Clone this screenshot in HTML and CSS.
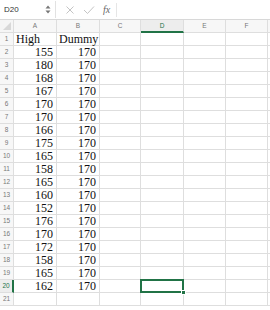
FILE: index.html
```html
<!DOCTYPE html>
<html>
<head>
<meta charset="utf-8">
<link rel="stylesheet" href="styles.css">
</head>
<body>
<div class="fbar">
  <div class="namebox">
    <span class="ref">D20</span>
    <svg class="spin" width="6" height="11" viewBox="0 0 6 11"><path d="M0.5 4.5 L3 1.5 L5.5 4.5 Z M0.5 6.5 L3 9.5 L5.5 6.5 Z" fill="#777"/></svg>
  </div>
  <div class="sep"></div>
  <div class="tools">
    <svg width="10" height="10" viewBox="0 0 10 10"><path d="M1.5 1.5 L8.5 8.5 M8.5 1.5 L1.5 8.5" stroke="#c4c4c4" stroke-width="1"/></svg>
    <svg width="12" height="10" viewBox="0 0 12 10"><path d="M1 5 L4.5 8.5 L11 1.5" stroke="#c4c4c4" stroke-width="1" fill="none"/></svg>
    <span class="fx">fx</span>
  </div>
  <div class="sep2"></div>
</div>
<div class="grid">
  <div class="corner"><svg width="10" height="10" viewBox="0 0 10 10"><path d="M9 1 L9 9 L1 9 Z" fill="#d8d8d8"/></svg></div>
  <div class="ch">A</div><div class="ch">B</div><div class="ch">C</div><div class="ch chsel">D</div><div class="ch">E</div><div class="ch">F</div><div class="ch last"></div>

  <div class="rh">1</div><div class="c t">High</div><div class="c t">Dummy</div><div class="c"></div><div class="c"></div><div class="c"></div><div class="c"></div><div class="c last"></div>
  <div class="rh">2</div><div class="c n">155</div><div class="c n">170</div><div class="c"></div><div class="c"></div><div class="c"></div><div class="c"></div><div class="c last"></div>
  <div class="rh">3</div><div class="c n">180</div><div class="c n">170</div><div class="c"></div><div class="c"></div><div class="c"></div><div class="c"></div><div class="c last"></div>
  <div class="rh">4</div><div class="c n">168</div><div class="c n">170</div><div class="c"></div><div class="c"></div><div class="c"></div><div class="c"></div><div class="c last"></div>
  <div class="rh">5</div><div class="c n">167</div><div class="c n">170</div><div class="c"></div><div class="c"></div><div class="c"></div><div class="c"></div><div class="c last"></div>
  <div class="rh">6</div><div class="c n">170</div><div class="c n">170</div><div class="c"></div><div class="c"></div><div class="c"></div><div class="c"></div><div class="c last"></div>
  <div class="rh">7</div><div class="c n">170</div><div class="c n">170</div><div class="c"></div><div class="c"></div><div class="c"></div><div class="c"></div><div class="c last"></div>
  <div class="rh">8</div><div class="c n">166</div><div class="c n">170</div><div class="c"></div><div class="c"></div><div class="c"></div><div class="c"></div><div class="c last"></div>
  <div class="rh">9</div><div class="c n">175</div><div class="c n">170</div><div class="c"></div><div class="c"></div><div class="c"></div><div class="c"></div><div class="c last"></div>
  <div class="rh">10</div><div class="c n">165</div><div class="c n">170</div><div class="c"></div><div class="c"></div><div class="c"></div><div class="c"></div><div class="c last"></div>
  <div class="rh">11</div><div class="c n">158</div><div class="c n">170</div><div class="c"></div><div class="c"></div><div class="c"></div><div class="c"></div><div class="c last"></div>
  <div class="rh">12</div><div class="c n">165</div><div class="c n">170</div><div class="c"></div><div class="c"></div><div class="c"></div><div class="c"></div><div class="c last"></div>
  <div class="rh">13</div><div class="c n">160</div><div class="c n">170</div><div class="c"></div><div class="c"></div><div class="c"></div><div class="c"></div><div class="c last"></div>
  <div class="rh">14</div><div class="c n">152</div><div class="c n">170</div><div class="c"></div><div class="c"></div><div class="c"></div><div class="c"></div><div class="c last"></div>
  <div class="rh">15</div><div class="c n">176</div><div class="c n">170</div><div class="c"></div><div class="c"></div><div class="c"></div><div class="c"></div><div class="c last"></div>
  <div class="rh">16</div><div class="c n">170</div><div class="c n">170</div><div class="c"></div><div class="c"></div><div class="c"></div><div class="c"></div><div class="c last"></div>
  <div class="rh">17</div><div class="c n">172</div><div class="c n">170</div><div class="c"></div><div class="c"></div><div class="c"></div><div class="c"></div><div class="c last"></div>
  <div class="rh">18</div><div class="c n">158</div><div class="c n">170</div><div class="c"></div><div class="c"></div><div class="c"></div><div class="c"></div><div class="c last"></div>
  <div class="rh">19</div><div class="c n">165</div><div class="c n">170</div><div class="c"></div><div class="c"></div><div class="c"></div><div class="c"></div><div class="c last"></div>
  <div class="rh rhsel">20</div><div class="c n">162</div><div class="c n">170</div><div class="c"></div><div class="c sel"><span class="handle"></span></div><div class="c"></div><div class="c"></div><div class="c last"></div>
  <div class="rh">21</div><div class="c"></div><div class="c"></div><div class="c"></div><div class="c"></div><div class="c"></div><div class="c"></div><div class="c last"></div>
</div>
</body>
</html>
```
FILE: styles.css
```css
html, body {
  margin: 0;
  padding: 0;
  background: #fff;
  width: 270px;
  height: 310px;
  overflow: hidden;
}
body {
  font-family: "Liberation Sans", Arial, sans-serif;
}
.fbar {
  height: 20px;
  display: flex;
  align-items: center;
  border-bottom: 1px solid #d8d8d8;
  box-sizing: border-box;
}
.namebox {
  width: 56px;
  height: 17px;
  display: flex;
  align-items: center;
  justify-content: space-between;
  padding: 0 4px 0 4px;
  box-sizing: border-box;
  border-right: 1px solid #e2e2e2;
}
.ref {
  font-size: 8px;
  color: #333;
}
.spin {
  display: block;
}
.sep {
  width: 8px;
}
.tools {
  display: flex;
  align-items: center;
  gap: 8px;
  padding-left: 1px;
}
.fx {
  font-family: "Liberation Serif", serif;
  font-style: italic;
  font-size: 10px;
  color: #666;
}
.sep2 {
  width: 1px;
  height: 14px;
  background: #e6e6e6;
  margin-left: 6px;
}
.grid {
  display: grid;
  grid-template-columns: 14px 43px 43px 41px 43px 42px 42px 2px;
  grid-template-rows: repeat(22, 13px);
}
.grid > div {
  box-sizing: border-box;
  border-right: 1px solid #dedede;
  border-bottom: 1px solid #dedede;
}
.grid > .last {
  border-right: none;
}
.corner {
  background: #f5f5f5;
  display: flex;
  align-items: flex-end;
  justify-content: flex-end;
}
.corner svg {
  display: block;
  margin: 0 1px 1px 0;
}
.ch {
  background: #f7f7f7;
  font-size: 6.5px;
  color: #777;
  text-align: center;
  line-height: 12px;
}
.grid > .chsel {
  color: #217346;
  background: #ededed;
  border-bottom: 2px solid #217346;
}
.rh {
  background: #f7f7f7;
  font-size: 6.5px;
  color: #777;
  text-align: center;
  line-height: 12px;
}
.grid > .rhsel {
  color: #217346;
  background: #ededed;
  border-right: 2px solid #217346;
}
.c {
  font-family: "Liberation Serif", "Times New Roman", serif;
  font-size: 12px;
  line-height: 13px;
  color: #111;
  white-space: nowrap;
  overflow: visible;
}
.t {
  padding-left: 2px;
}
.n {
  text-align: right;
  padding-right: 3px;
}
.grid > .sel {
  position: relative;
  border: 2px solid #217346;
  margin: -1px 0 0 -1px;
  width: calc(100% + 1px);
  height: 14px;
}
.handle {
  position: absolute;
  right: -4px;
  bottom: -4px;
  width: 5px;
  height: 5px;
  background: #217346;
  border: 1px solid #fff;
  box-sizing: border-box;
}
```
